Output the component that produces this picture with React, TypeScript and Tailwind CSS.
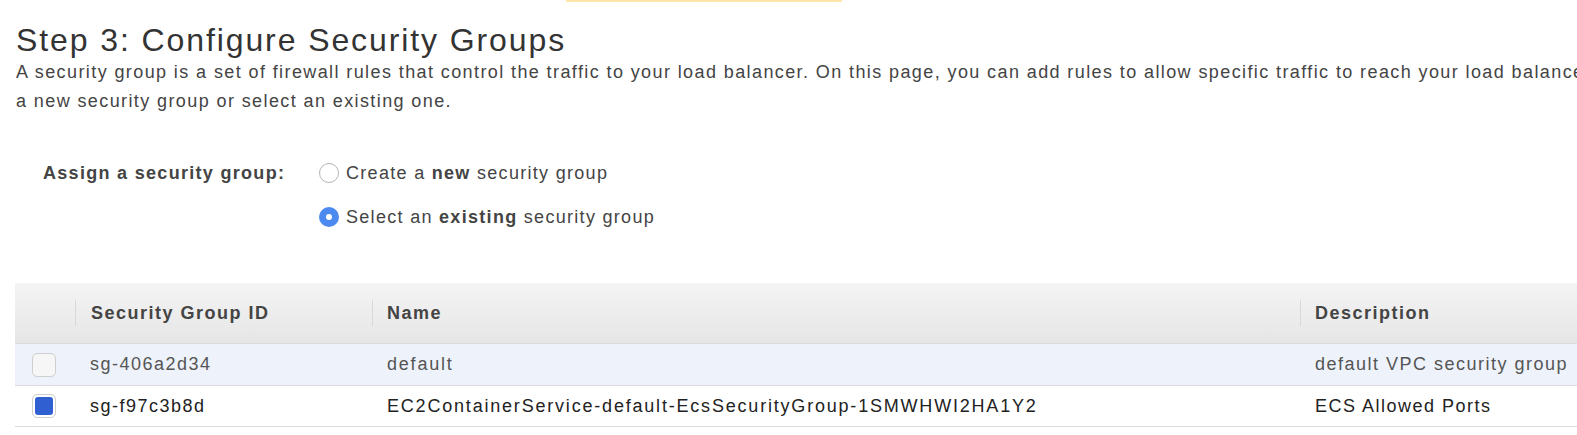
import React from "react";

const rows = [
  { id: "sg-406a2d34", name: "default", desc: "default VPC security group", checked: false },
  {
    id: "sg-f97c3b8d",
    name: "EC2ContainerService-default-EcsSecurityGroup-1SMWHWI2HA1Y2",
    desc: "ECS Allowed Ports",
    checked: true,
  },
];

const Radio = ({ on }: { on: boolean }) =>
  on ? (
    <span className="w-[20px] h-[20px] rounded-full bg-[#4d8af0] flex items-center justify-center shrink-0">
      <span className="w-[6px] h-[6px] rounded-full bg-white" />
    </span>
  ) : (
    <span className="w-[20px] h-[20px] rounded-full border border-[#b4b4b4] bg-white shrink-0" />
  );

export default function App() {
  return (
    <div className="w-[1577px] h-[435px] overflow-hidden bg-white text-[#444] font-['Liberation_Sans',Arial,sans-serif]">
      {/* edge of the box above */}
      <div className="ml-[566px] w-[276px] h-[2px] bg-[#fde6a8]" />

      <div className="pl-[16px]">
        <h1 className="text-[32px] leading-[34px] tracking-[1.9px] mt-[21px] text-[#333]">
          Step 3: Configure Security Groups
        </h1>
        <p className="text-[18px] leading-[29px] tracking-[1.4px] mt-[1px] whitespace-nowrap">
          <span className="block">
            A security group is a set of firewall rules that control the traffic to your load balancer. On this page, you
            can add rules to allow specific traffic to reach your load balancer.
          </span>
          <span className="block">a new security group or select an existing one.</span>
        </p>
      </div>

      {/* assign */}
      <div className="flex mt-[46px] pl-[43px] text-[18px] tracking-[1.3px] leading-[22px]">
        <div className="w-[276px] font-bold">Assign a security group:</div>
        <div className="flex flex-col gap-[22px]">
          <label className="flex items-center gap-[7px]">
            <Radio on={false} />
            <span>
              Create a <b>new</b> security group
            </span>
          </label>
          <label className="flex items-center gap-[7px]">
            <Radio on={true} />
            <span>
              Select an <b>existing</b> security group
            </span>
          </label>
        </div>
      </div>

      {/* table */}
      <div className="ml-[15px] mt-[55px] w-[1700px] text-[18px] tracking-[1.5px] whitespace-nowrap">
        <div className="flex h-[60px] items-center bg-gradient-to-b from-[#f4f4f4] to-[#e6e6e6] font-bold text-[#444]">
          <div className="w-[61px] h-[26px] border-r border-[#d8d8d8]" />
          <div className="w-[297px] pl-[15px] h-[26px] leading-[26px] border-r border-[#d8d8d8]">Security Group ID</div>
          <div className="w-[928px] pl-[14px] h-[26px] leading-[26px] border-r border-[#d8d8d8]">Name</div>
          <div className="flex-1 pl-[14px] h-[26px] leading-[26px]">Description</div>
        </div>
        {rows.map((r, i) => (
          <div
            key={r.id}
            className={`flex h-[42px] items-center border-t border-[#dcdcdc] ${
              i === 0 ? "bg-[#eef3fb] text-[#555]" : "bg-white text-[#222]"
            } ${i === rows.length - 1 ? "border-b" : ""}`}
          >
            <div className="w-[61px] pl-[17px]">
              {r.checked ? (
                <span className="block w-[24px] h-[24px] rounded-[5px] border border-[#d0d0d0] bg-white p-[2px]">
                  <span className="block w-full h-full rounded-[3px] bg-[#2f5fd0]" />
                </span>
              ) : (
                <span className="block w-[24px] h-[24px] rounded-[5px] border border-[#cfcfcf] bg-[#f6f6f6]" />
              )}
            </div>
            <div className="w-[297px] pl-[14px]">{r.id}</div>
            <div className="w-[928px] pl-[14px] tracking-[1.8px]">{r.name}</div>
            <div className="flex-1 pl-[14px]">{r.desc}</div>
          </div>
        ))}
      </div>
    </div>
  );
}
